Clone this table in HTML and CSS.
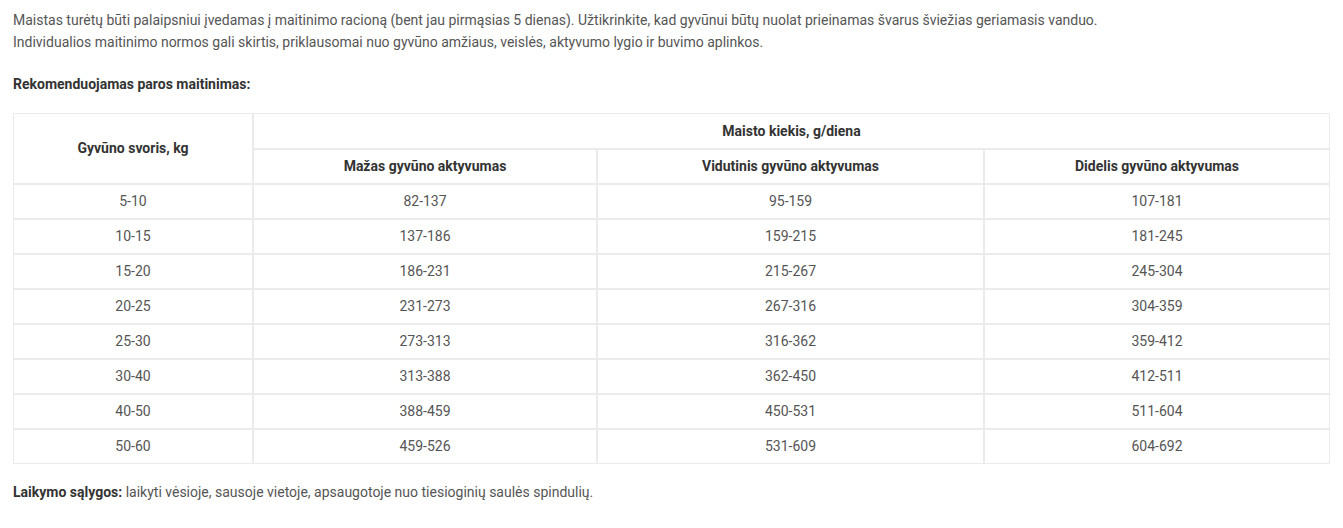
FILE: index.html
```html
<!DOCTYPE html>
<html lang="lt">
<head>
<meta charset="utf-8">
<link rel="stylesheet" href="styles.css">
</head>
<body>
<div class="content">
  <p class="intro">Maistas turėtų būti palaipsniui įvedamas į maitinimo racioną (bent jau pirmąsias 5 dienas). Užtikrinkite, kad gyvūnui būtų nuolat prieinamas švarus šviežias geriamasis vanduo.<br>Individualios maitinimo normos gali skirtis, priklausomai nuo gyvūno amžiaus, veislės, aktyvumo lygio ir buvimo aplinkos.</p>
  <p class="heading">Rekomenduojamas paros maitinimas:</p>
  <table class="feed">
    <colgroup>
      <col class="c1"><col class="c2"><col class="c3"><col class="c4">
    </colgroup>
    <thead>
      <tr class="h1">
        <th rowspan="2">Gyvūno svoris, kg</th>
        <th colspan="3">Maisto kiekis, g/diena</th>
      </tr>
      <tr class="h2">
        <th>Mažas gyvūno aktyvumas</th>
        <th>Vidutinis gyvūno aktyvumas</th>
        <th>Didelis gyvūno aktyvumas</th>
      </tr>
    </thead>
    <tbody>
      <tr><td>5-10</td><td>82-137</td><td>95-159</td><td>107-181</td></tr>
      <tr><td>10-15</td><td>137-186</td><td>159-215</td><td>181-245</td></tr>
      <tr><td>15-20</td><td>186-231</td><td>215-267</td><td>245-304</td></tr>
      <tr><td>20-25</td><td>231-273</td><td>267-316</td><td>304-359</td></tr>
      <tr><td>25-30</td><td>273-313</td><td>316-362</td><td>359-412</td></tr>
      <tr><td>30-40</td><td>313-388</td><td>362-450</td><td>412-511</td></tr>
      <tr><td>40-50</td><td>388-459</td><td>450-531</td><td>511-604</td></tr>
      <tr><td>50-60</td><td>459-526</td><td>531-609</td><td>604-692</td></tr>
    </tbody>
  </table>
  <p class="storage"><strong>Laikymo sąlygos:</strong> laikyti vėsioje, sausoje vietoje, apsaugotoje nuo tiesioginių saulės spindulių.</p>
</div>
</body>
</html>
```

FILE: styles.css
```css
html, body {
  margin: 0;
  padding: 0;
  background: #ffffff;
}

.content {
  padding: 9px 13px 0 13px;
  font-family: Roboto, "Liberation Sans", sans-serif;
  font-size: 14px;
  line-height: 22px;
  color: #555555;
}

.intro {
  margin: 0 0 20px 0;
}

.heading {
  margin: 0 0 18px 0;
  font-weight: bold;
  color: #333333;
}

.feed {
  width: 1317px;
  border-collapse: separate;
  border-spacing: 0;
  table-layout: fixed;
}

.c1 { width: 240px; }
.c2 { width: 344px; }
.c3 { width: 387px; }
.c4 { width: 346px; }

.feed th,
.feed td {
  border: 1px solid #ebebeb;
  text-align: center;
  padding: 0 8px;
  height: 33px;
  line-height: 19px;
}

.feed th {
  font-weight: bold;
  color: #333333;
}

.feed tr.h1 th {
  height: 34px;
}

.feed td {
  color: #555555;
}

.storage {
  margin: 17px 0 0 0;
}

.storage strong {
  color: #333333;
}
```
